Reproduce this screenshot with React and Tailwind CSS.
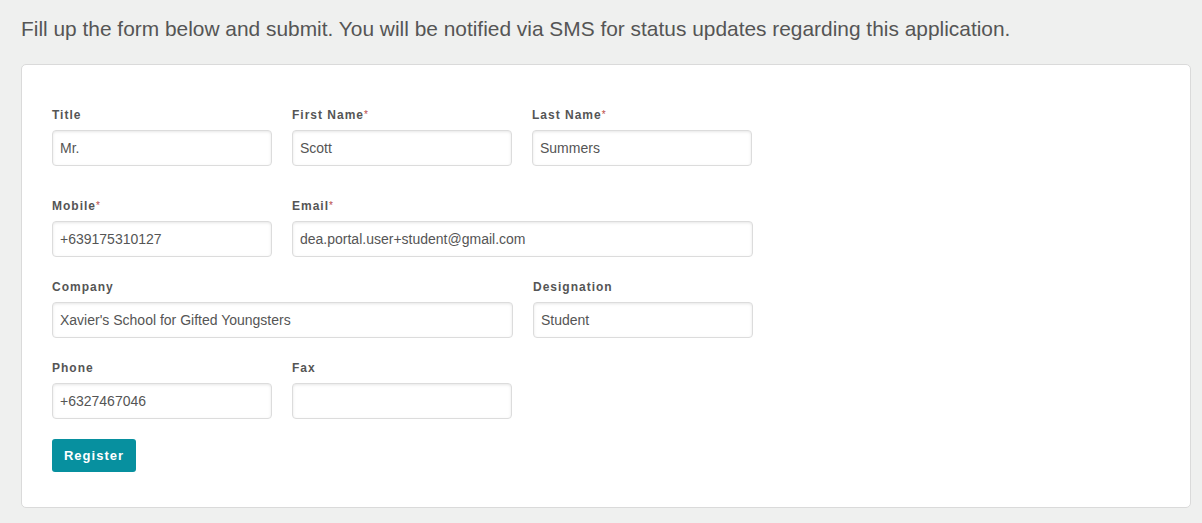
const ROWS = [
  [
    { label: 'Title', value: 'Mr.' },
    { label: 'First Name', value: 'Scott', required: true },
    { label: 'Last Name', value: 'Summers', required: true },
  ],
  [
    { label: 'Mobile', value: '+639175310127', required: true },
    { label: 'Email', value: 'dea.portal.user+student@gmail.com', required: true, wide: true },
  ],
  [
    { label: 'Company', value: "Xavier's School for Gifted Youngsters", wide: true },
    { label: 'Designation', value: 'Student' },
  ],
  [
    { label: 'Phone', value: '+6327467046' },
    { label: 'Fax', value: '' },
  ],
];

const Field = ({ label, value, required, wide }) => (
  <div className={wide ? 'w-[461px]' : 'w-[220px]'}>
    <label className="block text-[12px] leading-[16px] font-bold tracking-[1px] text-[#555] mb-[7px]">
      {label}
      {required && <span className="text-[#b94a48] font-normal text-[10px] tracking-normal align-top">*</span>}
    </label>
    <input
      readOnly
      value={value}
      className="w-full h-[36px] px-[7px] rounded-[4px] border border-[#dcdcdc] bg-white text-[14px] text-[#555] shadow-[inset_0_1px_3px_rgba(0,0,0,0.1)] outline-none"
    />
  </div>
);

export default function App() {
  return (
    <div className="min-h-[523px] bg-[#eff0ef] px-[21px] pt-[15px] pb-[14px] font-['Liberation_Sans',Arial,sans-serif]">
      <p className="text-[20.9px] leading-[28px] text-[#555] mb-[21px]">
        Fill up the form below and submit. You will be notified via SMS for status updates regarding this application.
      </p>

      <div className="w-[1170px] bg-white border border-[#dadada] rounded-[5px] pl-[30px] pt-[42px] pb-[35px]">
        <div className="flex flex-col gap-[22px]">
          {ROWS.map((row, i) => (
            <div key={i} className={`flex gap-[20px] ${i === 0 ? 'mb-[10px]' : ''}`}>
              {row.map((f) => (
                <Field key={f.label} {...f} />
              ))}
            </div>
          ))}
        </div>

        <button className="mt-[20px] h-[33px] w-[84px] rounded-[3px] bg-[#07909f] text-white text-[13px] font-bold tracking-[1px]">
          Register
        </button>
      </div>
    </div>
  );
}
